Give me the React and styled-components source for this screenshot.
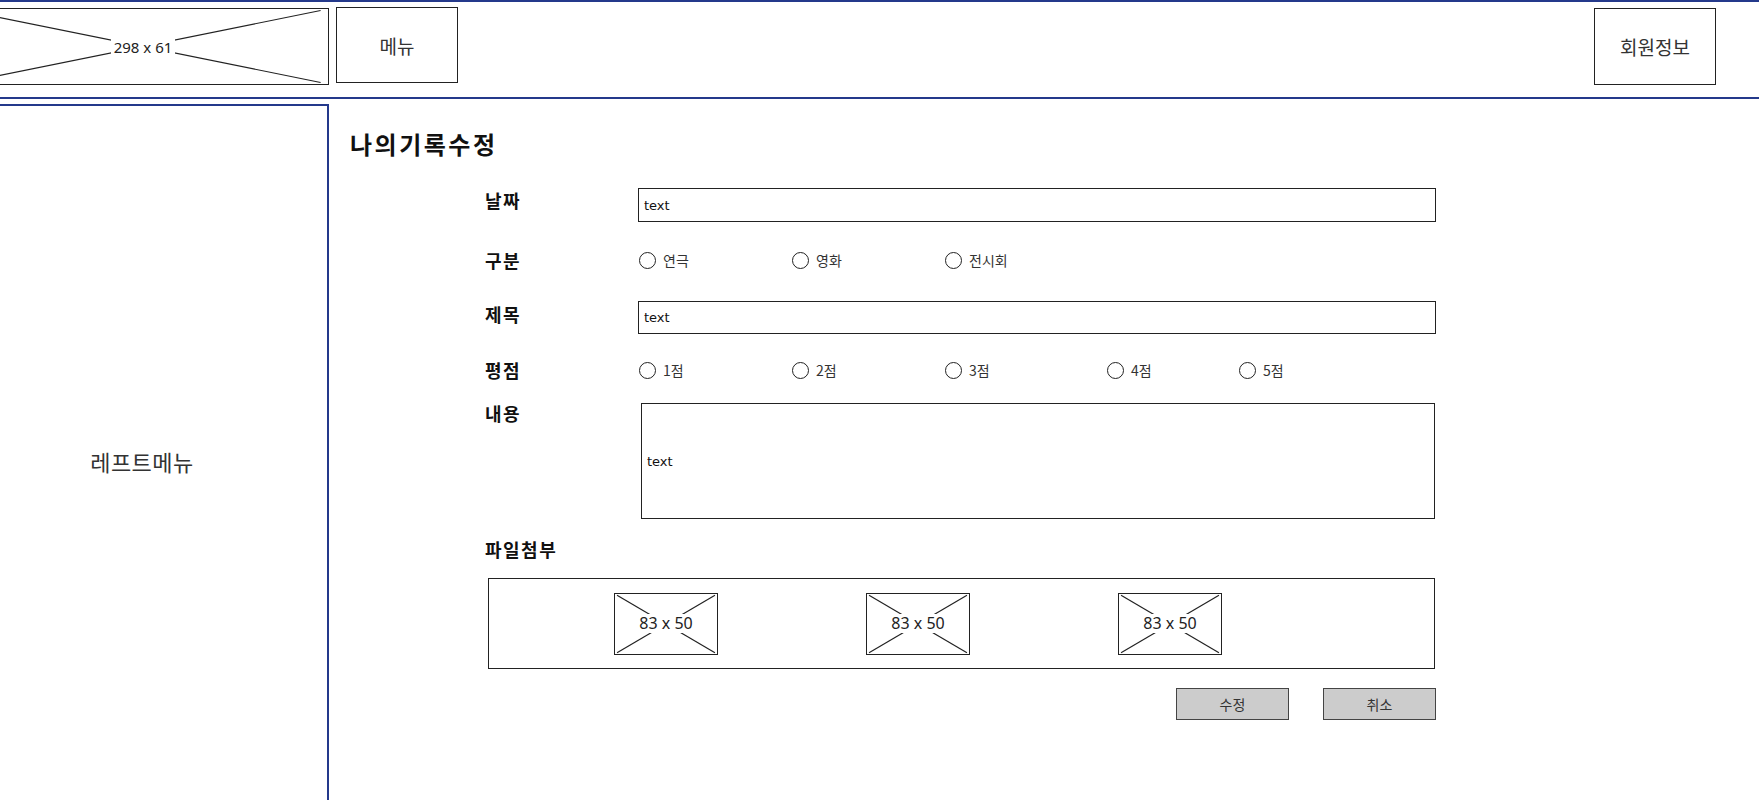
import React from "react";
import styled, { createGlobalStyle } from "styled-components";

const NAVY = "#24398b";
const INK = "#333";

const Global = createGlobalStyle`
  html, body { margin: 0; padding: 0; overflow: hidden; background: #fff; }
  body { font-family: "Noto Sans CJK KR", "Noto Sans", sans-serif; color: #222; }
  * { box-sizing: border-box; }
`;

const Page = styled.div`
  width: 1759px;
  height: 800px;
  overflow: hidden;
`;

const Header = styled.header`
  height: 99px;
  border-top: 2px solid ${NAVY};
  border-bottom: 2px solid ${NAVY};
  display: flex;
  align-items: flex-start;
  padding-top: 6px;
`;

const Spacer = styled.div`
  flex: 1;
`;

const PlaceholderBox = styled.div`
  position: relative;
  flex-shrink: 0;
  width: ${(p) => p.$w}px;
  height: ${(p) => p.$h}px;
  margin-left: ${(p) => p.$ml || 0}px;
  border: 1px solid #222;
  background: #fff;
  display: flex;
  align-items: center;
  justify-content: center;
`;

const CrossLines = styled.svg`
  position: absolute;
  inset: 0;
  width: 100%;
  height: 100%;
`;

const PlaceholderLabel = styled.span`
  position: relative;
  z-index: 1;
  background: #fff;
  padding: 0 3px;
  font-family: "Noto Sans", "Liberation Sans", sans-serif;
  font-size: ${(p) => p.$size || 16}px;
  line-height: 1.2;
  color: #222;
`;

const Placeholder = ({ w, h, ml, label, size }) => (
  <PlaceholderBox $w={w} $h={h} $ml={ml}>
    <CrossLines viewBox="0 0 100 100" preserveAspectRatio="none">
      <line x1="2" y1="2" x2="98" y2="98" stroke="#222" strokeWidth="1.2" vectorEffect="non-scaling-stroke" />
      <line x1="2" y1="98" x2="98" y2="2" stroke="#222" strokeWidth="1.2" vectorEffect="non-scaling-stroke" />
    </CrossLines>
    <PlaceholderLabel $size={size}>{label}</PlaceholderLabel>
  </PlaceholderBox>
);

const HeaderButton = styled.div`
  flex-shrink: 0;
  width: 122px;
  height: ${(p) => p.$h}px;
  margin-left: ${(p) => p.$ml || 0}px;
  margin-right: ${(p) => p.$mr || 0}px;
  margin-top: ${(p) => p.$mt || 0}px;
  border: 1px solid #222;
  display: flex;
  align-items: center;
  justify-content: center;
  font-size: 19px;
  color: ${INK};
`;

const BodyRow = styled.div`
  display: flex;
  margin-top: 5px;
`;

const LeftPanel = styled.aside`
  flex-shrink: 0;
  margin-left: -43px;
  width: 372px;
  height: 712px;
  border-top: 2px solid ${NAVY};
  border-right: 2px solid ${NAVY};
  display: flex;
  align-items: center;
  justify-content: center;
  font-size: 22px;
  letter-spacing: 0.5px;
  color: ${INK};
`;

const Main = styled.main`
  flex: 1;
  padding-left: 21px;
`;

const Title = styled.h1`
  margin: 25px 0 0;
  font-size: 24px;
  font-weight: 700;
  line-height: 30px;
  letter-spacing: 2.5px;
  color: #111;
`;

const Form = styled.div`
  margin-left: 135px;
  width: 951px;
  display: flex;
  flex-direction: column;
`;

const Row = styled.div`
  display: grid;
  grid-template-columns: 153px 798px;
  margin-top: ${(p) => p.$mt}px;
  min-height: ${(p) => p.$h}px;
  align-items: ${(p) => p.$align || "center"};
`;

const Label = styled.div`
  margin-top: ${(p) => p.$dy || 0}px;
  font-size: 18px;
  font-weight: 700;
  line-height: 24px;
  letter-spacing: 1.5px;
  color: #111;
`;

const TextBox = styled.div`
  width: ${(p) => p.$w || 798}px;
  height: ${(p) => p.$h}px;
  margin-left: ${(p) => p.$ml || 0}px;
  border: 1px solid #222;
  display: flex;
  align-items: center;
  padding-left: 5px;
  font-family: "DejaVu Sans", sans-serif;
  font-size: 13px;
  color: #111;
`;

const RadioGroup = styled.div`
  display: flex;
  align-items: center;
  padding-left: 1px;
`;

const RadioOption = styled.label`
  display: flex;
  align-items: center;
  gap: 7px;
  width: ${(p) => (p.$w ? `${p.$w}px` : "auto")};
  flex-shrink: 0;
  font-size: 14px;
  color: ${INK};
`;

const Circle = styled.span`
  width: 17px;
  height: 17px;
  border: 1.5px solid #222;
  border-radius: 50%;
  flex-shrink: 0;
`;

const FileBox = styled.div`
  margin-top: 17px;
  margin-left: 3px;
  width: 947px;
  height: 91px;
  border: 1px solid #222;
  display: flex;
  align-items: center;
  gap: 148px;
  padding-left: 125px;
`;

const ButtonRow = styled.div`
  margin-top: 19px;
  display: flex;
  justify-content: flex-end;
  gap: 34px;
`;

const Button = styled.button`
  width: 113px;
  height: 32px;
  background: #cccccc;
  border: 1px solid #444;
  border-radius: 0;
  font-family: "Noto Sans CJK KR", sans-serif;
  font-size: 14px;
  color: ${INK};
  padding: 0;
`;

const Radios = ({ items }) => (
  <RadioGroup>
    {items.map(([text, w]) => (
      <RadioOption key={text} $w={w}>
        <Circle />
        {text}
      </RadioOption>
    ))}
  </RadioGroup>
);

export default function App() {
  return (
    <Page>
      <Global />
      <Header>
        <Placeholder w={372} h={77} ml={-43} label="298 x 61" size={15} />
        <HeaderButton $h={76} $ml={7} $mt={-1}>메뉴</HeaderButton>
        <Spacer />
        <HeaderButton $h={77} $mr={43}>회원정보</HeaderButton>
      </Header>
      <BodyRow>
        <LeftPanel>레프트메뉴</LeftPanel>
        <Main>
          <Title>나의기록수정</Title>
          <Form>
            <Row $mt={29} $h={34} $align="start">
              <Label>날짜</Label>
              <TextBox $h={34}>text</TextBox>
            </Row>
            <Row $mt={23} $h={30}>
              <Label>구분</Label>
              <Radios items={[["연극", 153], ["영화", 153], ["전시회"]]} />
            </Row>
            <Row $mt={26} $h={33} $align="start">
              <Label $dy={1}>제목</Label>
              <TextBox $h={33}>text</TextBox>
            </Row>
            <Row $mt={21} $h={30}>
              <Label>평점</Label>
              <Radios items={[["1점", 153], ["2점", 153], ["3점", 162], ["4점", 132], ["5점"]]} />
            </Row>
            <Row $mt={18} $h={116} $align="start">
              <Label $dy={-2}>내용</Label>
              <TextBox $h={116} $w={794} $ml={3}>text</TextBox>
            </Row>
            <Row $mt={18} $h={23}>
              <Label>파일첨부</Label>
            </Row>
            <FileBox>
              <Placeholder w={104} h={62} label="83 x 50" />
              <Placeholder w={104} h={62} label="83 x 50" />
              <Placeholder w={104} h={62} label="83 x 50" />
            </FileBox>
            <ButtonRow>
              <Button>수정</Button>
              <Button>취소</Button>
            </ButtonRow>
          </Form>
        </Main>
      </BodyRow>
    </Page>
  );
}
